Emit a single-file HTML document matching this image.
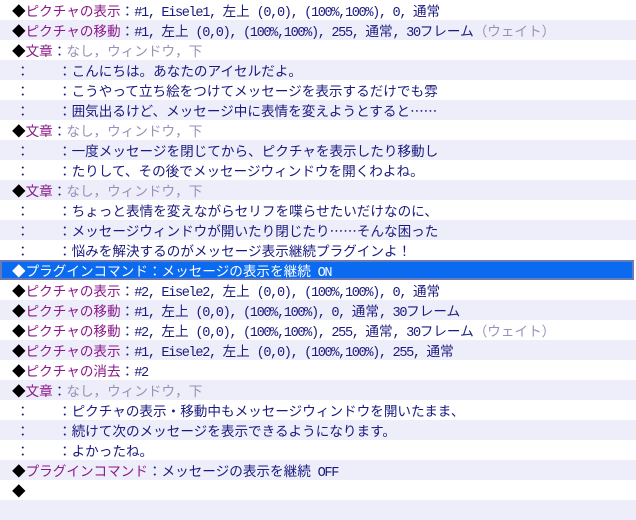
<!DOCTYPE html>
<html><head><meta charset="utf-8"><style>
html,body{margin:0;padding:0;background:#fff;}
body{width:636px;height:520px;overflow:hidden;position:relative;font-family:"Noto Sans CJK JP","Liberation Sans",sans-serif;font-size:13.6px;}
.r{height:20px;line-height:20px;white-space:nowrap;padding-left:12px;position:relative;color:#1a1a80;}
.r:nth-child(even){background:#eeeefa;}
.m{font-family:"Liberation Mono",monospace;font-size:13.6px;letter-spacing:-1.36px;}
.d{color:#000;}
.p{color:#8a1a8a;}
.g{color:#9a90b8;}
.t .c1{position:absolute;left:16px;}
.t .c2{position:absolute;left:58px;}
.sel{background:#0a6af0 !important;color:#fff;box-shadow:inset 0 0 0 2px #6a7ab8;margin-right:2px;}
.sel .d,.sel .p{color:#fff;}
</style></head><body>
<div class="r"><span class="d">◆</span><span class="p">ピクチャの表示</span>：<span class="m">#1, Eisele1, </span>左上<span class="m"> (0,0), (100%,100%), 0, </span>通常</div>
<div class="r"><span class="d">◆</span><span class="p">ピクチャの移動</span>：<span class="m">#1, </span>左上<span class="m"> (0,0), (100%,100%), 255, </span>通常<span class="m">, 30</span>フレーム<span class="g">（ウェイト）</span></div>
<div class="r"><span class="d">◆</span><span class="p">文章</span>：<span class="g">なし，ウィンドウ，下</span></div>
<div class="r t"><span class="c1">：</span><span class="c2">：こんにちは。あなたのアイセルだよ。</span></div>
<div class="r t"><span class="c1">：</span><span class="c2">：こうやって立ち絵をつけてメッセージを表示するだけでも雰</span></div>
<div class="r t"><span class="c1">：</span><span class="c2">：囲気出るけど、メッセージ中に表情を変えようとすると……</span></div>
<div class="r"><span class="d">◆</span><span class="p">文章</span>：<span class="g">なし，ウィンドウ，下</span></div>
<div class="r t"><span class="c1">：</span><span class="c2">：一度メッセージを閉じてから、ピクチャを表示したり移動し</span></div>
<div class="r t"><span class="c1">：</span><span class="c2">：たりして、その後でメッセージウィンドウを開くわよね。</span></div>
<div class="r"><span class="d">◆</span><span class="p">文章</span>：<span class="g">なし，ウィンドウ，下</span></div>
<div class="r t"><span class="c1">：</span><span class="c2">：ちょっと表情を変えながらセリフを喋らせたいだけなのに、</span></div>
<div class="r t"><span class="c1">：</span><span class="c2">：メッセージウィンドウが開いたり閉じたり……そんな困った</span></div>
<div class="r t"><span class="c1">：</span><span class="c2">：悩みを解決するのがメッセージ表示継続プラグインよ！</span></div>
<div class="r sel"><span class="d">◆</span><span class="p">プラグインコマンド</span>：メッセージの表示を継続<span class="m"> ON</span></div>
<div class="r"><span class="d">◆</span><span class="p">ピクチャの表示</span>：<span class="m">#2, Eisele2, </span>左上<span class="m"> (0,0), (100%,100%), 0, </span>通常</div>
<div class="r"><span class="d">◆</span><span class="p">ピクチャの移動</span>：<span class="m">#1, </span>左上<span class="m"> (0,0), (100%,100%), 0, </span>通常<span class="m">, 30</span>フレーム</div>
<div class="r"><span class="d">◆</span><span class="p">ピクチャの移動</span>：<span class="m">#2, </span>左上<span class="m"> (0,0), (100%,100%), 255, </span>通常<span class="m">, 30</span>フレーム<span class="g">（ウェイト）</span></div>
<div class="r"><span class="d">◆</span><span class="p">ピクチャの表示</span>：<span class="m">#1, Eisele2, </span>左上<span class="m"> (0,0), (100%,100%), 255, </span>通常</div>
<div class="r"><span class="d">◆</span><span class="p">ピクチャの消去</span>：<span class="m">#2</span></div>
<div class="r"><span class="d">◆</span><span class="p">文章</span>：<span class="g">なし，ウィンドウ，下</span></div>
<div class="r t"><span class="c1">：</span><span class="c2">：ピクチャの表示・移動中もメッセージウィンドウを開いたまま、</span></div>
<div class="r t"><span class="c1">：</span><span class="c2">：続けて次のメッセージを表示できるようになります。</span></div>
<div class="r t"><span class="c1">：</span><span class="c2">：よかったね。</span></div>
<div class="r"><span class="d">◆</span><span class="p">プラグインコマンド</span>：メッセージの表示を継続<span class="m"> OFF</span></div>
<div class="r"><span class="d">◆</span></div>
<div class="r"></div>
</body></html>
